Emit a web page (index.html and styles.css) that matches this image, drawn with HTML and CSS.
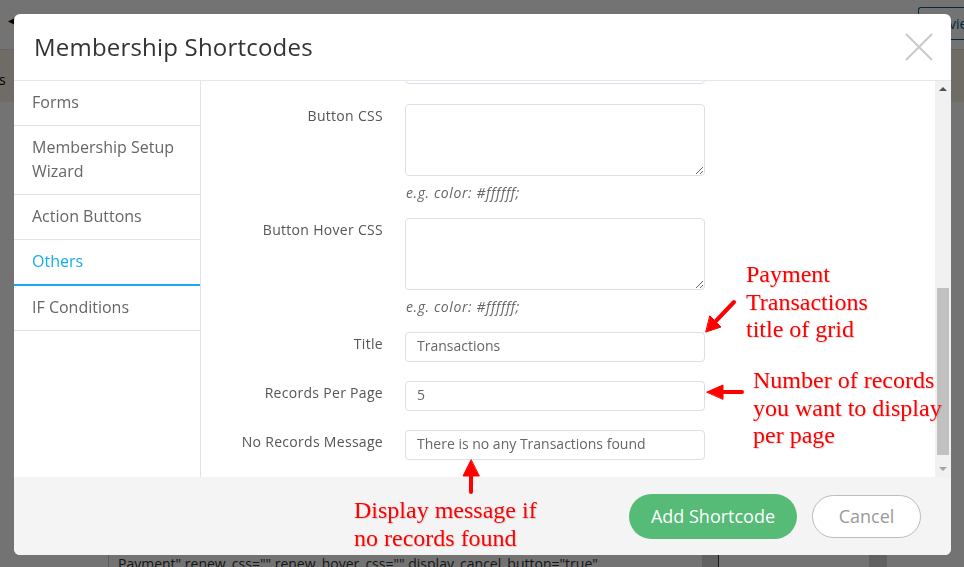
FILE: index.html
```html
<!DOCTYPE html>
<html lang="en">
<head>
    <meta charset="UTF-8">
    <meta name="viewport" content="width=device-width, initial-scale=1.0">
    <title>Membership Shortcodes</title>
    <link rel="stylesheet" href="styles.css">
</head>
<body>

    <!-- page behind the dialog -->
    <div class="page">
        <div class="page-top">
            <span class="back-arrow">&#9664;</span>
            <span class="preview-btn">Preview</span>
        </div>
        <div class="page-notice">This page is</div>
        <div class="page-main">
            <div class="code-row">
                <div class="code-box">Payment" renew_css="" renew_hover_css="" display_cancel_button="true"</div>
                <div class="code-block dark"></div>
                <div class="code-block"></div>
                <div class="code-block dark small"></div>
            </div>
        </div>
    </div>

    <div class="overlay"></div>

    <!-- the dialog -->
    <div class="modal">
        <div class="modal-header">
            <h2>Membership Shortcodes</h2>
            <svg class="close-icon" width="28" height="28" viewBox="0 0 28 28">
                <path d="M1 1 L27 27 M27 1 L1 27" stroke="#cacaca" stroke-width="2" fill="none"/>
            </svg>
        </div>

        <div class="modal-body">
            <ul class="side-menu">
                <li>Forms</li>
                <li>Membership Setup Wizard</li>
                <li>Action Buttons</li>
                <li class="active">Others</li>
                <li>IF Conditions</li>
            </ul>

            <div class="form-area">
                <input class="text-input partial" type="text" value="">

                <div class="field-row">
                    <label>Button CSS</label>
                    <textarea class="text-area"></textarea>
                    <span class="hint">e.g. color: #ffffff;</span>
                </div>

                <div class="field-row">
                    <label>Button Hover CSS</label>
                    <textarea class="text-area"></textarea>
                    <span class="hint">e.g. color: #ffffff;</span>
                </div>

                <div class="field-row">
                    <label>Title</label>
                    <input class="text-input" type="text" value="Transactions">
                </div>

                <div class="field-row">
                    <label>Records Per Page</label>
                    <input class="text-input" type="text" value="5">
                </div>

                <div class="field-row">
                    <label>No Records Message</label>
                    <input class="text-input" type="text" value="There is no any Transactions found">
                </div>
            </div>

            <div class="scrollbar">
                <div class="scroll-btn up"></div>
                <div class="scroll-track"><div class="scroll-thumb"></div></div>
                <div class="scroll-btn down"></div>
            </div>
        </div>

        <div class="modal-footer">
            <button class="btn-add">Add Shortcode</button>
            <button class="btn-cancel">Cancel</button>
        </div>
    </div>

    <!-- red notes drawn over the screenshot -->
    <div class="note note-title">Payment<br>Transactions<br>title of grid</div>
    <div class="note note-records">Number of records<br>you want to display<br>per page</div>
    <div class="note note-empty">Display message if<br>no records found</div>

    <svg class="note-arrows" width="964" height="567" viewBox="0 0 964 567">
        <g fill="#ff0000" stroke="#ff0000" stroke-width="4" stroke-linecap="round">
            <line x1="734" y1="302" x2="715" y2="322"/>
            <polygon stroke-width="1" points="706,332 721,327 710,316"/>
            <line x1="742" y1="392" x2="722" y2="392"/>
            <polygon stroke-width="1" points="707,392 723,385 723,399"/>
            <line x1="471" y1="492" x2="471" y2="474"/>
            <polygon stroke-width="1" points="471,460 463,476 479,476"/>
        </g>
    </svg>

</body>
</html>
```

FILE: styles.css
```css
/* general */
body {
    margin: 0;
    padding: 0;
    width: 964px;
    height: 567px;
    overflow: hidden;
    font-family: 'Open Sans', sans-serif;
    background: #ffffff;
}

/* --- page behind the dialog --- */
.page {
    display: flex;
    flex-direction: column;
    height: 567px;
    overflow: hidden;
}

.page-top {
    height: 50px;
    display: flex;
    align-items: flex-start;
    justify-content: space-between;
    border-bottom: 1px solid #dddddd;
    box-sizing: border-box;
}

.back-arrow {
    font-size: 10px;
    margin: 13px 0 0 8px;
    color: #000;
}

.preview-btn {
    margin-top: 7px;
    width: 46px;
    height: 33px;
    border: 1px solid #0a5d8a;
    border-right: none;
    border-radius: 3px 0 0 3px;
    box-sizing: border-box;
    color: #0a5d8a;
    font-size: 14px;
    line-height: 31px;
    padding-left: 8px;
    white-space: nowrap;
    overflow: hidden;
}

.page-notice {
    height: 52px;
    background: #f7f0e2;
    font-size: 14px;
    line-height: 60px;
    text-indent: -70px;
    color: #000;
}

.page-main {
    flex: 1;
    display: flex;
    flex-direction: column;
    justify-content: flex-end;
}

.code-row {
    display: flex;
    height: 14px;
}

.code-box {
    margin-left: 108px;
    width: 584px;
    border-left: 1px solid #cccccc;
    padding-left: 9px;
    font-size: 14px;
    line-height: 22px;
    color: #333;
    white-space: nowrap;
    overflow: hidden;
}

.code-block {
    width: 150px;
    border-left: 1px solid #333;
}

.code-block.dark {
    width: 16px;
    border-left: none;
    background: #d8d8d8;
}

.code-block.small {
    width: 18px;
}

.overlay {
    position: fixed;
    inset: 0;
    background: rgba(0, 0, 0, 0.55);
}

/* --- dialog --- */
.modal {
    position: fixed;
    left: 14px;
    top: 14px;
    width: 937px;
    height: 541px;
    background: #ffffff;
    border-radius: 6px;
    overflow: hidden;
    display: flex;
    flex-direction: column;
}

.modal-header {
    height: 66px;
    flex-shrink: 0;
    border-bottom: 1px solid #e4e7eb;
    display: flex;
    align-items: center;
    justify-content: space-between;
    padding: 0 18px 0 20px;
}

.modal-header h2 {
    margin: 0 0 2px 0;
    font-size: 24px;
    font-weight: 400;
    color: #333333;
    letter-spacing: 0.2px;
}

.close-icon {
    margin-top: -1px;
}

.modal-body {
    flex: 1;
    display: flex;
    min-height: 0;
}

.side-menu {
    list-style: none;
    margin: 0;
    padding: 0;
    width: 186px;
    border-right: 1px solid #dfe4ea;
    flex-shrink: 0;
}

.side-menu li {
    padding: 9px 18px 11px;
    font-size: 16px;
    line-height: 24px;
    color: #666666;
    border-bottom: 1px solid #dfe4ea;
}

.side-menu li.active {
    color: #13aee9;
    border-bottom: 2px solid #13aee9;
}

.form-area {
    flex: 1;
    overflow: hidden;
}

.field-row {
    display: grid;
    grid-template-columns: 182px 300px;
    column-gap: 22px;
    margin-bottom: 19px;
}

.field-row label {
    text-align: right;
    font-size: 14px;
    line-height: 24px;
    letter-spacing: 0.3px;
    color: #555555;
}

.text-input,
.text-area {
    display: block;
    width: 300px;
    box-sizing: border-box;
    border: 1px solid #d9e0e8;
    border-radius: 4px;
    font-family: 'Open Sans', sans-serif;
    font-size: 14px;
    color: #666666;
    background: #ffffff;
    margin: 0;
}

.text-input {
    height: 30px;
    padding: 0 11px 3px;
}

.text-input.partial {
    margin: -27px 0 20px 204px;
}

.text-area {
    height: 72px;
    resize: vertical;
    padding: 6px 11px;
}

.hint {
    grid-column: 2;
    font-size: 14px;
    font-style: italic;
    line-height: 20px;
    letter-spacing: 0.6px;
    color: #666666;
    margin: 7px 0 -4px 1px;
}

/* fake scrollbar of the form panel */
.scrollbar {
    width: 16px;
    flex-shrink: 0;
    background: #f1f1f1;
    display: flex;
    flex-direction: column;
}

.scroll-btn {
    height: 17px;
    position: relative;
}

.scroll-btn.up::after,
.scroll-btn.down::after {
    content: "";
    position: absolute;
    left: 4px;
    border-left: 4px solid transparent;
    border-right: 4px solid transparent;
}

.scroll-btn.up::after {
    top: 6px;
    border-bottom: 4px solid #505050;
}

.scroll-btn.down::after {
    top: 7px;
    border-top: 4px solid #a3a3a3;
}

.scroll-track {
    flex: 1;
}

.scroll-thumb {
    margin: 190px 0 0 2px;
    width: 12px;
    height: 167px;
    background: #c1c1c1;
}

.modal-footer {
    height: 78px;
    flex-shrink: 0;
    background: #f4f4f4;
    display: flex;
    align-items: center;
    justify-content: flex-end;
    gap: 15px;
    padding-right: 30px;
}

.btn-add {
    width: 168px;
    height: 45px;
    border: none;
    border-radius: 23px;
    background: #55bb77;
    color: #ffffff;
    font-family: 'Open Sans', sans-serif;
    font-size: 18px;
    padding: 0;
}

.btn-cancel {
    width: 109px;
    height: 43px;
    border: 1px solid #bcbcbc;
    border-radius: 22px;
    background: #ffffff;
    color: #9a9a9a;
    font-family: 'Open Sans', sans-serif;
    font-size: 18px;
    padding: 0;
}

/* --- red notes --- */
.note {
    position: fixed;
    font-family: 'Liberation Serif', 'Times New Roman', serif;
    font-size: 24px;
    line-height: 27.6px;
    color: #ff0000;
    white-space: nowrap;
    text-shadow: 1px 1px 1px rgba(0, 0, 0, 0.15);
}

.note-title {
    left: 746px;
    top: 261px;
}

.note-records {
    left: 753px;
    top: 367px;
}

.note-empty {
    left: 354px;
    top: 497px;
}

.note-arrows {
    position: fixed;
    left: 0;
    top: 0;
    pointer-events: none;
}
```
